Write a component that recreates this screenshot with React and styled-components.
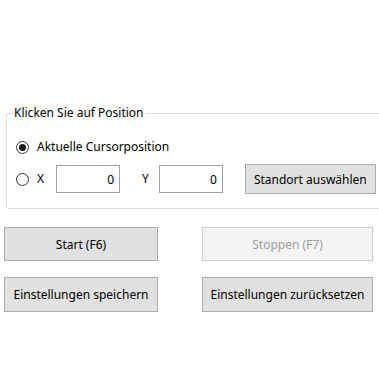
import React from "react";
import styled, { createGlobalStyle } from "styled-components";

const Global = createGlobalStyle`
  html, body {
    margin: 0;
    padding: 0;
    background: #ffffff;
    overflow: hidden;
  }
  body {
    font-family: "Noto Sans", "Liberation Sans", sans-serif;
    font-size: 12px;
    color: #000000;
  }
`;

const Page = styled.div`
  width: 379px;
  height: 379px;
  padding-top: 105px;
  box-sizing: border-box;
  overflow: hidden;
`;

const GroupBox = styled.fieldset`
  margin: 0 0 0 6px;
  width: 374px;
  height: 104px;
  box-sizing: border-box;
  border: 1px solid #dcdcdc;
  border-right: none;
  border-radius: 3px 0 0 3px;
  padding: 0 0 0 5px;
`;

const Legend = styled.legend`
  padding: 0 2px;
  font-size: 12px;
  line-height: 16px;
`;

const Content = styled.div`
  display: flex;
  flex-direction: column;
  gap: 6px;
  padding: 15px 0 0 4px;
`;

const Row = styled.div`
  display: flex;
  align-items: center;
  height: ${(p) => p.$h || 22}px;
`;

const Radio = styled.span`
  width: 13px;
  height: 13px;
  box-sizing: border-box;
  border: 1px solid #333333;
  border-radius: 50%;
  display: flex;
  align-items: center;
  justify-content: center;
  margin-right: 8px;
  flex-shrink: 0;
  &::after {
    content: "";
    display: ${(p) => (p.$checked ? "block" : "none")};
    width: 7px;
    height: 7px;
    border-radius: 50%;
    background: #1a1a1a;
  }
`;

const Label = styled.span`
  font-size: 12px;
  line-height: 16px;
  margin-right: ${(p) => p.$mr || 0}px;
`;

const NumField = styled.div`
  width: 64px;
  height: 28px;
  box-sizing: border-box;
  border: 1px solid #a0a0a0;
  background: #ffffff;
  display: flex;
  align-items: center;
  justify-content: flex-end;
  padding-right: 5px;
  font-size: 12px;
  margin-right: ${(p) => p.$mr || 0}px;
`;

const Button = styled.div`
  box-sizing: border-box;
  width: ${(p) => p.$w}px;
  height: ${(p) => p.$h || 34}px;
  display: flex;
  align-items: center;
  justify-content: center;
  font-size: 12px;
  background: ${(p) => (p.$disabled ? "#f4f4f4" : "#e1e1e1")};
  border: 1px solid ${(p) => (p.$disabled ? "#cccccc" : "#adadad")};
  color: ${(p) => (p.$disabled ? "#a0a0a0" : "#000000")};
`;

const ButtonGrid = styled.div`
  display: grid;
  grid-template-columns: 154px 171px;
  column-gap: 44px;
  row-gap: 16px;
  padding: 18px 0 0 4px;
`;

export default function App() {
  return (
    <Page>
      <Global />
      <GroupBox>
        <Legend>Klicken Sie auf Position</Legend>
        <Content>
          <Row>
            <Radio $checked />
            <Label>Aktuelle Cursorposition</Label>
          </Row>
          <Row $h={30}>
            <Radio />
            <Label $mr={12}>X</Label>
            <NumField $mr={22}>0</NumField>
            <Label $mr={10}>Y</Label>
            <NumField $mr={22}>0</NumField>
            <Button $w={131} $h={30}>Standort auswählen</Button>
          </Row>
        </Content>
      </GroupBox>
      <ButtonGrid>
        <Button $w={154}>Start (F6)</Button>
        <Button $w={171} $disabled>Stoppen (F7)</Button>
        <Button $w={154} $h={35}>Einstellungen speichern</Button>
        <Button $w={171} $h={35}>Einstellungen zurücksetzen</Button>
      </ButtonGrid>
    </Page>
  );
}
